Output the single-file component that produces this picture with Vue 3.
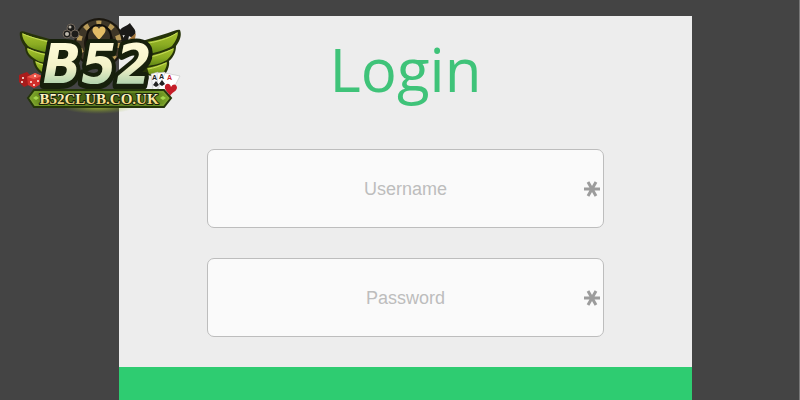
<script setup>
import { reactive } from 'vue'

const form = reactive({
  username: '',
  password: '',
})

const fields = [
  { name: 'username', label: 'Username', type: 'text', autocomplete: 'username' },
  { name: 'password', label: 'Password', type: 'password', autocomplete: 'current-password' },
]
</script>

<template>
  <main class="page">
    <a class="brand" href="#" aria-label="B52CLUB.CO.UK">
      <svg viewBox="15 10 175 110" aria-hidden="true">
        <defs>
          <linearGradient id="wing" x1="0" y1="0" x2="0" y2="1">
            <stop offset="0" stop-color="#a9c42e" />
            <stop offset="0.55" stop-color="#8aab22" />
            <stop offset="1" stop-color="#5f8514" />
          </linearGradient>
          <linearGradient id="letters" x1="0" y1="0" x2="0" y2="1">
            <stop offset="0.2" stop-color="#fffbd8" />
            <stop offset="0.55" stop-color="#f3f2c8" />
            <stop offset="0.85" stop-color="#a9cfaa" />
          </linearGradient>
          <linearGradient id="ribbon" x1="0" y1="0" x2="1" y2="0">
            <stop offset="0" stop-color="#84ad2c" />
            <stop offset="0.14" stop-color="#557916" />
            <stop offset="0.5" stop-color="#3c5512" />
            <stop offset="0.86" stop-color="#557916" />
            <stop offset="1" stop-color="#84ad2c" />
          </linearGradient>
          <linearGradient id="gold" x1="0" y1="0" x2="0" y2="1">
            <stop offset="0.2" stop-color="#fffbd0" />
            <stop offset="1" stop-color="#edc552" />
          </linearGradient>
          <radialGradient id="glow">
            <stop offset="0" stop-color="#c4e02c" stop-opacity="0.7" />
            <stop offset="1" stop-color="#8cb01c" stop-opacity="0" />
          </radialGradient>
        </defs>

        <ellipse cx="98" cy="107" rx="36" ry="7" fill="url(#glow)" />

        <!-- poker chip -->
        <circle cx="99" cy="43" r="25" fill="#1b170f" />
        <circle cx="99" cy="43" r="19" fill="none" stroke="#3e3627" stroke-width="8" />
        <circle
          cx="99"
          cy="43"
          r="20"
          fill="none"
          stroke="#b89a58"
          stroke-width="5"
          stroke-dasharray="5 8"
        />
        <circle cx="99" cy="37" r="12" fill="#3a3325" stroke="#100e0a" stroke-width="2" />
        <path
          d="M99 40C96 36 92 33 92.500 29.500C93 26 97.500 25.500 99 29C100.500 25.500 105 26 105.500 29.500C106 33 102 36 99 40Z"
          fill="#e4bd66"
        />

        <!-- club and spade -->
        <g fill="#1d1c1a" stroke="#6f655a" stroke-width="1">
          <circle cx="71" cy="28" r="4" />
          <circle cx="67" cy="34" r="4" />
          <circle cx="75" cy="34" r="4" />
        </g>
        <circle cx="70" cy="27" r="1.500" fill="#bcb6aa" />
        <circle cx="67" cy="34" r="2" fill="#bcb6aa" />
        <path
          d="M130 23C132 27 137 30 135 34C134 37 131 38 129 36L128 41H121L125 35C121 36 118 33 120 30C122 27 127 26 130 23Z"
          fill="#1a1918"
        />
        <path d="M129 39L136 33L135 39Z" fill="#a4763c" />

        <!-- wings -->
        <path
          d="M20 32C22 30 26 32 32 34L60 42L56 77L40 73C35 69 33 63 33 60C27 57 25 51 25 47C21 42 19 36 20 32Z"
          fill="#263309"
        />
        <path
          d="M180 30C178 29 174 31 168 33L139 42L142 74L161 78C167 74 170 66 169 61C174 57 176 51 176 46C180 41 182 35 180 30Z"
          fill="#263309"
        />
        <g fill="url(#wing)">
          <path d="M22 33C30 37 44 40 60 43L56 54C45 52 34 50 28 46C24 42 22 37 22 33Z" />
          <path d="M27 48C36 52 45 54 56 55L54 64C44 63 39 62 35 59C30 56 27 52 27 48Z" />
          <path d="M35 61C42 64 48 65 54 65L51 75L42 72C38 69 36 65 35 61Z" />
          <path d="M178 32C169 38 156 41 139 43L144 55C155 53 166 50 172 46C176 41 178 36 178 32Z" />
          <path d="M174 48C165 52 156 55 144 57L147 66C156 65 162 63 167 60C171 56 174 52 174 48Z" />
          <path d="M167 62C160 65 153 67 147 68L149 74L160 76C164 73 167 67 167 62Z" />
        </g>
        <g fill="none" stroke="#c6dc58" stroke-width="1">
          <path d="M23 34C32 38 45 41 57 44" />
          <path d="M28 49C37 53 45 55 54 56" />
          <path d="M36 62C42 65 47 66 52 66" />
          <path d="M177 33C168 39 156 42 143 44" />
          <path d="M173 49C165 53 156 56 146 58" />
          <path d="M166 63C160 66 154 68 148 69" />
        </g>

        <!-- dice -->
        <g>
          <path d="M19 75L27 72L32 77L31 84L24 87L19 82Z" fill="#a81c1c" />
          <path d="M27 77L35 73L42 76L41 84L34 88L28 85Z" fill="#d22f2b" />
          <path d="M27 77L34 79L42 76L35 73Z" fill="#ec5a4d" />
          <g fill="#fff2ea">
            <circle cx="23" cy="78" r="1" />
            <circle cx="22" cy="82" r="1" />
            <circle cx="35" cy="76" r="1" />
            <circle cx="31" cy="82" r="1" />
            <circle cx="34" cy="85" r="1" />
            <circle cx="38" cy="81" r="1" />
          </g>
        </g>

        <!-- cards -->
        <g stroke="#b9b9b9" stroke-width="0.500">
          <path d="M151 74L158 72L162 88L153 90Z" fill="#f6f6f6" />
          <path d="M157 73L165 72L168 89L158 90Z" fill="#fafafa" />
          <path d="M165 73L180 76L169 97L157 92Z" fill="#fff" />
        </g>
        <g font-family="'Liberation Sans', sans-serif" font-size="7" font-weight="700">
          <text x="152" y="80" fill="#222">A</text>
          <text x="159" y="79" fill="#222">A</text>
          <text x="167" y="80" fill="#c8202a">A</text>
        </g>
        <g fill="#222">
          <path d="M156 81L159 85L156 87L153 85Z" />
          <path d="M162 80L165 84L162 86L159 84Z" />
        </g>
        <path
          d="M170 96C168 92 164 90 165 86C166 83 170 83 171 87C173 83 177 84 177 88C176 92 172 92 170 96Z"
          fill="#c51d28"
        />

        <text class="brand-name" x="97" y="83">B52</text>

        <!-- ribbon -->
        <path
          d="M34 90H164L171 98L164 107H34L28 98Z"
          fill="url(#ribbon)"
          stroke="#25360b"
          stroke-width="2"
        />
        <path d="M35 92H163L169 98L163 105H35L30 98Z" fill="none" stroke="#7fa332" />
        <path d="M33 98L36 96L39 98L36 100Z" fill="#a5d64d" />
        <path d="M160 98L163 96L166 98L163 100Z" fill="#a5d64d" />
        <text class="brand-site" x="99" y="104">B52CLUB.CO.UK</text>
      </svg>
    </a>

    <form class="card" @submit.prevent>
      <h1 class="title">Login</h1>
      <div class="fields">
        <div v-for="field in fields" :key="field.name" class="field">
          <input
            v-model="form[field.name]"
            class="input"
            :type="field.type"
            :name="field.name"
            :placeholder="field.label"
            :aria-label="field.label"
            :autocomplete="field.autocomplete"
            required
          />
          <svg class="required" viewBox="0 0 16 16" aria-hidden="true">
            <path d="M0 8H16M4 1L12 15M12 1L4 15" />
          </svg>
        </div>
      </div>
      <button class="submit" type="submit" aria-label="Login"></button>
    </form>
  </main>
</template>

<style>
body {
  background: #444;
}
</style>

<style scoped>
.page {
  position: relative;
  box-sizing: border-box;
  display: flex;
  min-height: 100vh;
  padding: 16px 107px 0 119px;
  border-right: 1px solid #777;
  background: #444;
  font-family: 'Liberation Sans', Arial, sans-serif;
}

.brand {
  position: absolute;
  top: 10px;
  left: 15px;
  width: 175px;
}

.brand svg {
  display: block;
  width: 100%;
}

.brand-name,
.brand-site {
  font-weight: 700;
  text-anchor: middle;
  stroke: #17200c;
  stroke-linejoin: round;
  paint-order: stroke;
}

.brand-name {
  fill: url(#letters);
  stroke-width: 8px;
  font-family: 'DejaVu Sans Condensed', 'DejaVu Sans', sans-serif;
  font-size: 56px;
  font-style: italic;
  font-stretch: condensed;
  filter: drop-shadow(0 2px 0 #17200c);
}

.brand-site {
  fill: url(#gold);
  stroke-width: 2px;
  font-family: 'Liberation Serif', serif;
  font-size: 15px;
}

.card {
  display: flex;
  flex: 1;
  flex-direction: column;
  min-width: 0;
  background: #ededed;
}

.title {
  margin: 0;
  padding: 13px 0 40px;
  color: #3fc379;
  font-family: 'Open Sans', sans-serif;
  font-size: 60px;
  font-weight: 400;
  line-height: 80px;
  text-align: center;
}

.fields {
  display: flex;
  flex-direction: column;
  gap: 30px;
  padding: 0 88px 30px;
}

.field {
  display: flex;
  align-items: center;
  box-sizing: border-box;
  height: 79px;
  padding-right: 3px;
  border: 1px solid #bdbdbd;
  border-radius: 7px;
  background: #fafafa;
}

.field:focus-within {
  border-color: #2ecc71;
}

.input {
  box-sizing: border-box;
  flex: 1;
  min-width: 0;
  height: 100%;
  padding: 2px 0 0 19px;
  border: 0;
  outline: 0;
  background: transparent;
  color: #555;
  font: inherit;
  font-size: 18px;
  text-align: center;
}

.input::placeholder {
  color: #bdbdbd;
  opacity: 1;
}

.required {
  flex: none;
  width: 16px;
  height: 16px;
  fill: none;
  stroke: #9c9c9c;
  stroke-width: 3;
}

.submit {
  flex: 1;
  min-height: 33px;
  padding: 0;
  border: 0;
  background: #2ecc71;
  cursor: pointer;
}
</style>
